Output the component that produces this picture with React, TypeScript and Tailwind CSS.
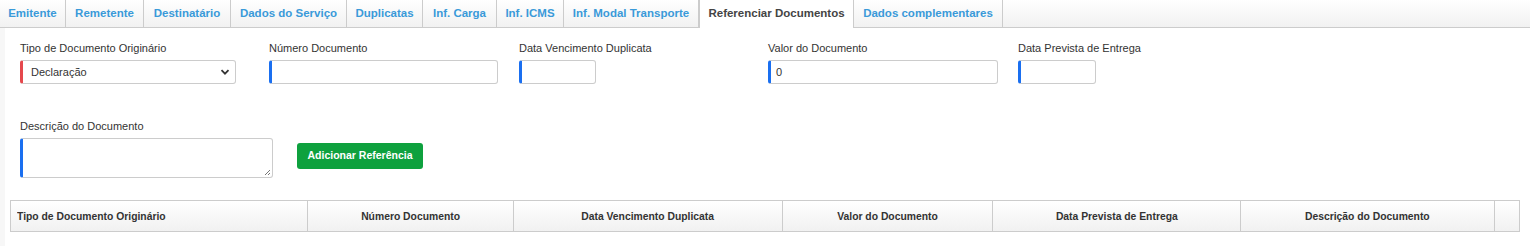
import React from "react";

const tabs = [
  { label: "Emitente", w: 66 },
  { label: "Remetente", w: 78 },
  { label: "Destinatário", w: 87 },
  { label: "Dados do Serviço", w: 116 },
  { label: "Duplicatas", w: 76 },
  { label: "Inf. Carga", w: 74 },
  { label: "Inf. ICMS", w: 67 },
  { label: "Inf. Modal Transporte", w: 135 },
  { label: "Referenciar Documentos", w: 155, active: true },
  { label: "Dados complementares", w: 149 },
];

const font = { fontFamily: '"Liberation Sans", Arial, sans-serif' };

function Label({ children }: { children: React.ReactNode }) {
  return <div className="text-[11px] leading-[16px] text-[#333] mb-[4px]">{children}</div>;
}

function Input({ w, value }: { w: string; value?: string }) {
  return (
    <div
      className={`${w} h-[24px] rounded-[3px] border border-[#ccc] border-l-[3px] border-l-[#1a6ff0] bg-white flex items-center pl-[5px] text-[11px] text-[#333]`}
    >
      {value}
    </div>
  );
}

export default function App() {
  const cols = [
    { label: "Tipo de Documento Originário", w: 297, align: "left" },
    { label: "Número Documento", w: 206 },
    { label: "Data Vencimento Duplicata", w: 269 },
    { label: "Valor do Documento", w: 210 },
    { label: "Data Prevista de Entrega", w: 248 },
    { label: "Descrição do Documento", w: 254 },
    { label: "", w: 0 },
  ];
  return (
    <div className="w-[1530px] h-[246px] bg-white overflow-hidden" style={font}>
      {/* Tabs */}
      <div className="flex h-[28px] border-b border-[#ccc] bg-gradient-to-b from-white to-[#f1f1f1]">
        {tabs.map((t) => (
          <div
            key={t.label}
            style={{ width: t.w }}
            className={`h-[28px] shrink-0 flex items-center justify-center text-[11.5px] font-bold border-r border-[#ccc] ${
              t.active
                ? "bg-white text-[#444] border-l -mb-px h-[28px]"
                : "text-[#3a9ad9]"
            }`}
          >
            {t.label}
          </div>
        ))}
      </div>

      <div className="flex">
        <div className="w-[5px] h-[218px] bg-[#f7f7f7]" />
        <div className="flex-1">
          {/* Row 1 */}
          <div className="grid grid-cols-[249px_250px_249px_250px_250px] pl-[15px] pt-[12px]">
            <div>
              <Label>Tipo de Documento Originário</Label>
              <div className="w-[216px] h-[24px] rounded-[3px] border border-[#ccc] border-l-[3px] border-l-[#e5484d] bg-white flex items-center justify-between pl-[8px] pr-[5px] text-[11px] text-[#333]">
                <span>Declaração</span>
                <svg width="10" height="10" viewBox="0 0 10 10">
                  <path d="M1.5 3.2 L5 6.7 L8.5 3.2" fill="none" stroke="#333" strokeWidth="1.8" />
                </svg>
              </div>
            </div>
            <div>
              <Label>Número Documento</Label>
              <Input w="w-[229px]" />
            </div>
            <div>
              <Label>Data Vencimento Duplicata</Label>
              <Input w="w-[77px]" />
            </div>
            <div>
              <Label>Valor do Documento</Label>
              <Input w="w-[230px]" value="0" />
            </div>
            <div>
              <Label>Data Prevista de Entrega</Label>
              <Input w="w-[78px]" />
            </div>
          </div>

          {/* Row 2 */}
          <div className="flex items-start pl-[15px] pt-[34px] gap-[24px]">
            <div>
              <Label>Descrição do Documento</Label>
              <div className="relative w-[253px] h-[40px] rounded-[3px] border border-[#ccc] border-l-[3px] border-l-[#1a6ff0] bg-white">
                <svg className="absolute right-[1px] bottom-[1px]" width="8" height="8" viewBox="0 0 8 8">
                  <path d="M7 2 L2 7 M7 5 L5 7" stroke="#777" strokeWidth="1" />
                </svg>
              </div>
            </div>
            <button className="mt-[25px] h-[26px] w-[126px] rounded-[3px] bg-[#0ea13e] text-white text-[10.5px] font-bold">
              Adicionar Referência
            </button>
          </div>

          {/* Table */}
          <div className="ml-[5px] mt-[22px] w-[1510px] h-[32px] flex border border-[#ccc] bg-gradient-to-b from-white to-[#f1f1f1]">
            {cols.map((c, i) => (
              <div
                key={i}
                style={c.w ? { width: c.w } : undefined}
                className={`${c.w ? "shrink-0 border-r border-[#ccc]" : "flex-1"} flex items-center overflow-hidden text-[11px] font-bold text-[#333] ${
                  c.align === "left" ? "pl-[6px] justify-start" : "justify-center"
                }`}
              >
                <span
                  className={`inline-block whitespace-nowrap scale-x-[0.94] ${
                    c.align === "left" ? "origin-left" : "origin-center"
                  }`}
                >
                  {c.label}
                </span>
              </div>
            ))}
          </div>
        </div>
      </div>
    </div>
  );
}
